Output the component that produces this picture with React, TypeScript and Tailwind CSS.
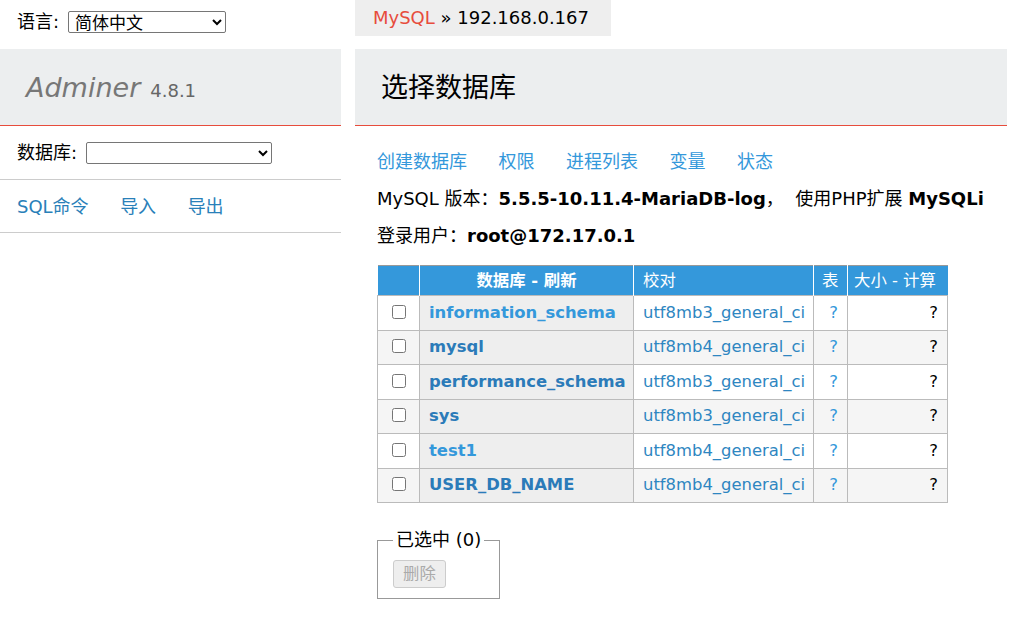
import React from 'react';

const font = { fontFamily: '"DejaVu Sans", "Noto Sans CJK SC", sans-serif' };

const databases = [
  { name: 'information_schema', collation: 'utf8mb3_general_ci', visited: false },
  { name: 'mysql', collation: 'utf8mb4_general_ci', visited: true },
  { name: 'performance_schema', collation: 'utf8mb3_general_ci', visited: true },
  { name: 'sys', collation: 'utf8mb3_general_ci', visited: true },
  { name: 'test1', collation: 'utf8mb4_general_ci', visited: false },
  { name: 'USER_DB_NAME', collation: 'utf8mb4_general_ci', visited: true },
];

const Sidebar = () => (
  <div className="w-[341px] shrink-0">
    <div className="h-[49px] pt-[11px] pl-[17px]">
      <div className="flex h-[22px] items-center gap-[9px]">
        <span>语言:</span>
        <select className="h-[22px] w-[158px] rounded-[2px] border border-[#767676] bg-white pl-[2px] text-[17px] leading-none">
          <option>简体中文</option>
        </select>
      </div>
    </div>
    <div className="flex h-[77px] items-center border-b border-[#e74c3c] bg-[#eceeef] pl-[26px] pt-[2px]">
      <span className="text-[27px] italic text-[#777]">Adminer</span>
      <span className="ml-[10px] mt-[6px] text-[18px] text-[#666]">4.8.1</span>
    </div>
    <div className="flex h-[54px] items-center gap-[9px] border-b border-[#ccc] pl-[17px]">
      <span>数据库:</span>
      <select className="h-[22px] w-[186px] rounded-[2px] border border-[#767676] bg-white">
        <option></option>
      </select>
    </div>
    <div className="flex h-[53px] items-center gap-[31.5px] border-b border-[#ccc] pl-[17px] pt-[1px] text-[#2980b9]">
      <a href="#">SQL命令</a>
      <a href="#">导入</a>
      <a href="#">导出</a>
    </div>
  </div>
);

export default function App() {
  return (
    <div className="flex w-[1027px] bg-white text-[18px] leading-[22px] text-black" style={font}>
      <Sidebar />
      <div className="ml-[14px] w-[652px]">
        <div className="inline-flex h-[36px] items-center bg-[#eee] pl-[18px] pr-[22px]">
          <a href="#" className="text-[#e74c3c]">MySQL</a>
          <span>&nbsp;» 192.168.0.167</span>
        </div>
        <h2 className="mt-[13px] flex h-[77px] items-center border-b border-[#e74c3c] bg-[#eceeef] pl-[26px] pt-[2px] text-[27px]">
          选择数据库
        </h2>
        <div className="pl-[22px]">
          <div className="mt-[25px] flex gap-[31.5px] text-[#3498db]">
            <a href="#">创建数据库</a>
            <a href="#">权限</a>
            <a href="#">进程列表</a>
            <a href="#">变量</a>
            <a href="#">状态</a>
          </div>
          <p className="mt-[15px] whitespace-nowrap">
            MySQL 版本：<b>5.5.5-10.11.4-MariaDB-log</b>，&nbsp; 使用PHP扩展 <b>MySQLi</b>
          </p>
          <p className="mt-[15px]">
            登录用户：<b>root@172.17.0.1</b>
          </p>
          <table className="mt-[18px] border-collapse border-t border-[#999] text-[16.4px]">
            <thead>
              <tr className="h-[30px] bg-[#3498db] text-left font-normal text-white">
                <td className="w-[42px] border-r border-white"></td>
                <th className="w-[214px] border-r border-white text-center">
                  数据库 - 刷新
                </th>
                <td className="w-[180px] border-r border-white pl-[9px]">校对</td>
                <td className="w-[34px] border-r border-white pl-[8px]">表</td>
                <td className="w-[100px] pl-[6px]">大小 - 计算</td>
              </tr>
            </thead>
            <tbody>
              {databases.map((db, i) => {
                const odd = i % 2 === 1;
                return (
                  <tr key={db.name} className={`h-[34.5px] ${odd ? 'bg-[#f5f5f5]' : 'bg-white'}`}>
                    <td className="border border-[#bbb] text-center align-middle">
                      <input type="checkbox" className="mt-[4px] h-[14px] w-[14px]" />
                    </td>
                    <th className="whitespace-nowrap border border-[#bbb] bg-[#eee] pl-[9px] text-left">
                      <a href="#" className={db.visited ? 'text-[#2b7bb9]' : 'text-[#3498db]'}>
                        {db.name}
                      </a>
                    </th>
                    <td className="whitespace-nowrap border border-[#bbb] pl-[9px] text-[#2e86c1]">{db.collation}</td>
                    <td className="border border-[#bbb] pr-[9px] text-right text-[#3498db]">?</td>
                    <td className="border border-[#bbb] pr-[9px] text-right">?</td>
                  </tr>
                );
              })}
            </tbody>
          </table>
          <fieldset className="mt-[26px] inline-block border border-[#999] px-[15px] pb-[10px] pt-[9px]">
            <legend className="px-[3px]">已选中 (0)</legend>
            <button
              disabled
              className="h-[28px] rounded-[3px] border border-[#ccc] bg-[#eee] px-[9px] text-[16.4px] text-[#aaa]"
            >
              删除
            </button>
          </fieldset>
        </div>
      </div>
    </div>
  );
}
